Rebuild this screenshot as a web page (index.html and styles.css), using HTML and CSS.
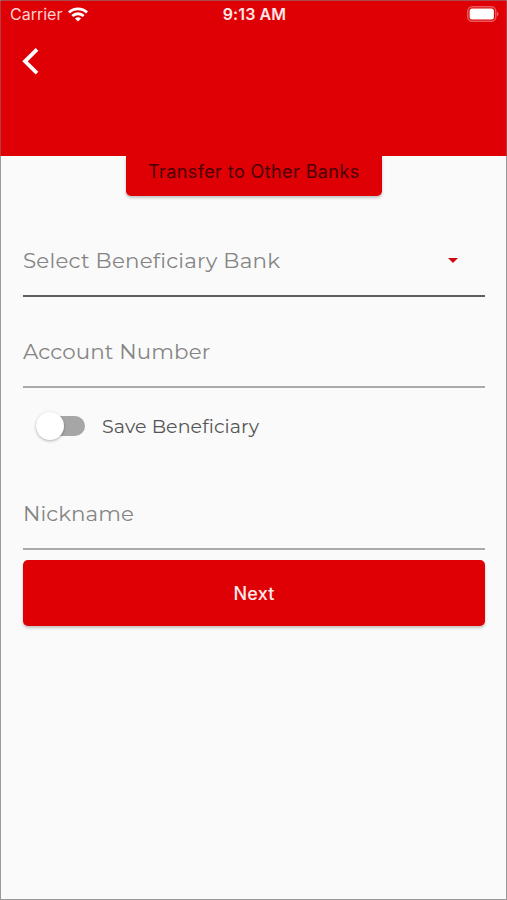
FILE: index.html
```html
<!DOCTYPE html>
<html lang="en">
<head>
<meta charset="utf-8">
<meta name="viewport" content="width=device-width, initial-scale=1">
<title>Transfer to Other Banks</title>
<link rel="stylesheet" href="styles.css">
</head>
<body>
<main class="screen">
  <header class="header">
    <div class="status">
      <div class="carrier"><span>Carrier</span>
        <svg width="20" height="15" viewBox="0 0 20 15" fill="none" stroke="#fff" stroke-width="2.9"><path d="M1 5.5C6 .6 14 .6 19 5.5M4.3 9C7.6 5.9 12.4 5.9 15.7 9"/><path d="M10 14.4 6.9 11.4Q10 8.9 13.1 11.4Z" fill="#fff" stroke="none"/></svg>
      </div>
      <time class="time">9:13 AM</time>
      <svg class="battery" width="32" height="16" viewBox="0 0 32 16"><rect x=".75" y=".75" width="28" height="14.5" rx="4.5" fill="none" stroke="#fff" stroke-opacity=".35" stroke-width="1.5"/><rect x="2.6" y="2.6" width="24.3" height="10.8" rx="2.5" fill="#fff"/><path d="M30 5.5q3 2.5 0 5z" fill="#fff" fill-opacity=".4"/></svg>
    </div>
    <button class="back" aria-label="Back"><svg width="18" height="28" viewBox="0 0 18 28" fill="none" stroke="#fff" stroke-width="3.8"><path d="M15 2.3 3 14.3l12 11.9"/></svg></button>
  </header>
  <h1 class="title"><span>Transfer to Other Banks</span></h1>
  <form class="form">
    <div class="field bank"><span class="bank-label">Select Beneficiary Bank</span><svg class="caret" width="10" height="5" viewBox="0 0 10 5"><path d="M0 0h10L5 5z" fill="#cf0710"/></svg></div>
    <div class="field account"><span>Account Number</span></div>
    <div class="save"><span class="switch"><span class="knob"></span></span><span class="save-label">Save Beneficiary</span></div>
    <div class="field nick"><span>Nickname</span></div>
    <button type="button" class="next">Next</button>
  </form>
</main>
</body>
</html>
```
FILE: styles.css
```css
* { box-sizing: border-box; }
body { margin: 0; background: #fafafa; font-family: Montserrat, Inter, sans-serif; }
.screen { height: 900px; border: 1px solid #999; border-top-color: #a84a4f; background: #fafafa; }
.header { height: 155px; background: #de0004; margin: 0 -1px; padding: 0 1px; border-left: 1px solid #b53b40; border-right: 1px solid #b53b40; }
.status { height: 28px; display: grid; grid-template-columns: 1fr auto 1fr; align-items: center; color: #fff; padding: 0 6px 2px 8px; font-family: Inter, sans-serif; }
.carrier { display: flex; align-items: center; gap: 6px; font-size: 16px; letter-spacing: 0; color: #ffd2d2; }
.time { font-size: 16px; font-weight: 600; letter-spacing: .1px; color: #ffe6e6; }
.battery { justify-self: end; }
.back { display: block; margin: 18px 0 0 20px; padding: 0; border: 0; background: none; width: 18px; height: 28px; }
.back svg { display: block; }
.title { width: 256px; height: 40px; margin: 0 auto 0 125px; padding: 3px 0 0 22px; background: #de0004; border-radius: 0 0 5px 5px; box-shadow: 0 2px 3px rgba(0,0,0,.22); font: 400 18px/26px Inter, sans-serif; letter-spacing: .41px; color: #480004; white-space: nowrap; }
.form { padding: 0 21px 0 22px; }
.field { display: flex; align-items: center; color: #858585; font-size: 21.4px; font-weight: 400; letter-spacing: .1px; border-bottom: 2px solid #aaa; white-space: nowrap; }
.bank { height: 74px; margin-top: 27px; padding-top: 3px; justify-content: space-between; padding-right: 27px; border-bottom: 2px solid #605d60; }
.bank-label { padding-bottom: 2px; letter-spacing: .2px; }
.account { height: 91px; padding-top: 19px; }
.save { display: flex; align-items: center; height: 76px; padding-left: 13px; }
.switch { width: 49px; height: 20px; border-radius: 10px; background: #a6a6a6; display: flex; align-items: center; }
.knob { width: 28px; height: 28px; border-radius: 50%; background: #fff; box-shadow: 0 1px 3px rgba(0,0,0,.3); flex: none; }
.save-label { margin-left: 17px; font-size: 19px; font-weight: 400; letter-spacing: .1px; color: #555; white-space: nowrap; }
.nick { height: 86px; padding-top: 14px; }
.next { display: block; width: 100%; height: 66px; margin-top: 10px; padding: 0; border: 0; border-radius: 5px; background: #de0004; box-shadow: 0 2px 3px rgba(0,0,0,.22); color: #ffeaea; font: 500 18px/65px Inter, sans-serif; letter-spacing: .2px; }
```
